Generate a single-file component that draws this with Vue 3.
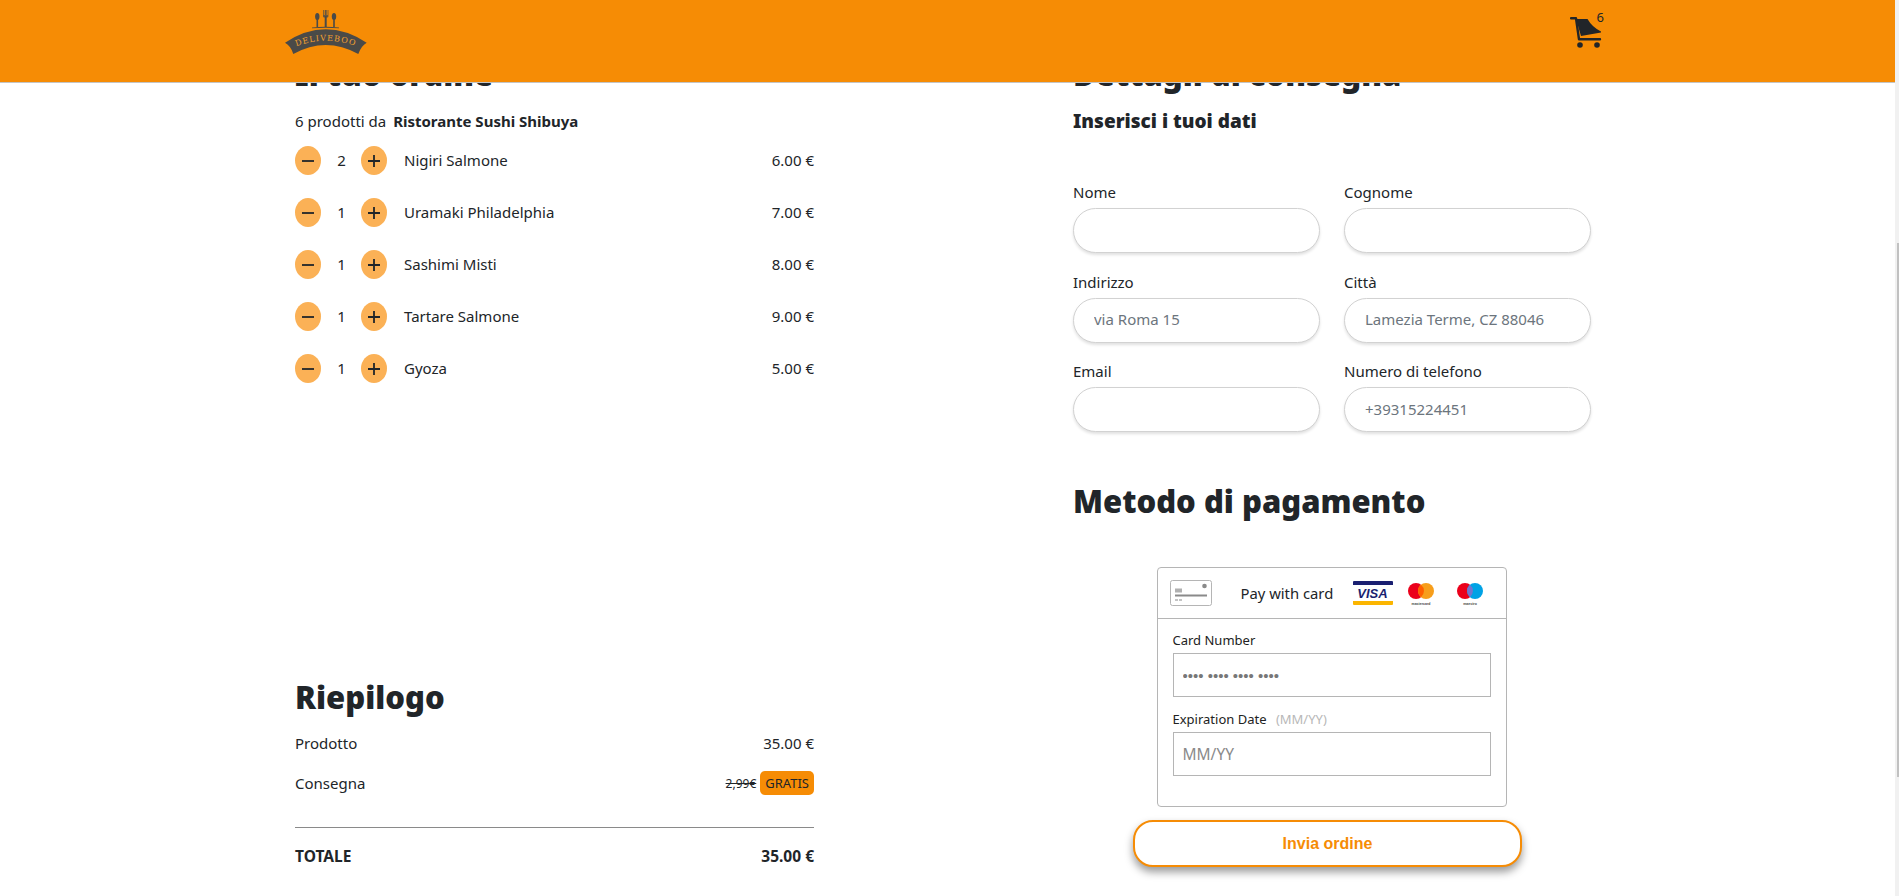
<template>
  <div class="page">
    <header class="topbar">
      <svg class="logo" viewBox="0 0 82 46" width="82" height="46">
        <g fill="#4a4a48">
          <ellipse cx="32.300" cy="7.500" rx="2.200" ry="3.600" />
          <rect x="31.500" y="9" width="1.600" height="9" />
          <ellipse cx="49" cy="7.500" rx="2.200" ry="3.600" />
          <rect x="48.200" y="9" width="1.600" height="9" />
          <rect x="39.700" y="7" width="2" height="11" />
          <path d="M38 1h.8v5h.9V1h2v5h.9V1h.8v6.500q0 1-1.200 1h-2.800q-1.400 0-1.400-1z" opacity="0.8" />
          <path d="M27 18.600q13.700-1.500 27 0v.7q-13.500-1-27 0z" />
          <path d="M0 33.700Q40.700 6.900 81.700 33.700Q76 37 73.300 45Q40.700 27 8.300 45Q6 37 0 33.700Z" />
        </g>
        <defs>
          <path id="logo-arc" d="M12 37Q40.700 26.500 69.500 37" />
        </defs>
        <text class="logo-text"><textPath href="#logo-arc" startOffset="50%" text-anchor="middle">DELIVEBOO</textPath></text>
      </svg>
      <div class="cart">
        <svg viewBox="0 0 32 31" width="32" height="31">
          <path fill="#212529" d="M6 2h11.500Q22 10 31 14.500v1L11 19z" />
          <path fill="none" stroke="#212529" stroke-width="2.400" stroke-linecap="round" stroke-linejoin="round" d="M1 1.300h5l3 21h21" />
          <circle cx="10" cy="28" r="2.800" fill="#212529" />
          <circle cx="27" cy="28" r="2.800" fill="#212529" />
        </svg>
        <span class="cart-count">6</span>
      </div>
    </header>
    <div class="scroll-track"><div class="scroll-thumb"></div></div>

    <main class="content">
      <section class="order-col">
        <div>
          <h2 class="title">Il tuo ordine</h2>
          <p class="order-from">6 prodotti da <strong>Ristorante Sushi Shibuya</strong></p>
          <ul class="items">
            <li v-for="item in items" :key="item.name" class="item">
              <button class="qty-btn" type="button">
                <svg viewBox="0 0 16 16" width="16" height="16"><path d="M2 8h12" /></svg>
              </button>
              <span class="qty">{{ item.qty }}</span>
              <button class="qty-btn" type="button">
                <svg viewBox="0 0 16 16" width="16" height="16"><path d="M2 8h12M8 2v12" /></svg>
              </button>
              <span class="item-name">{{ item.name }}</span>
              <span class="item-price">{{ item.price }} €</span>
            </li>
          </ul>
        </div>

        <div class="summary">
          <h2 class="title">Riepilogo</h2>
          <div class="summary-row first">
            <span>Prodotto</span>
            <span>35.00 €</span>
          </div>
          <div class="summary-row">
            <span>Consegna</span>
            <span class="delivery"><s>2,99€</s><span class="free">GRATIS</span></span>
          </div>
          <div class="summary-row total">
            <span>TOTALE</span>
            <span>35.00 €</span>
          </div>
        </div>
      </section>

      <section>
        <h2 class="title">Dettagli di consegna</h2>
        <h3 class="subtitle">Inserisci i tuoi dati</h3>
        <form class="fields" @submit.prevent>
          <label v-for="field in fields" :key="field.label" class="field">
            <span>{{ field.label }}</span>
            <input type="text" :placeholder="field.placeholder" />
          </label>
        </form>

        <h2 class="title pay-title">Metodo di pagamento</h2>

        <div class="card-box">
          <div class="card-head">
            <svg viewBox="0 0 42 26" width="42" height="26">
              <rect x="0.500" y="0.500" width="41" height="25" rx="2" fill="#fff" stroke="#b5b5b5" />
              <circle cx="34.500" cy="6" r="2.300" fill="#8a8a8a" />
              <rect x="5" y="8.500" width="7" height="4" fill="#b0b0b0" />
              <rect x="5" y="14.500" width="32" height="2" fill="#8a8a8a" />
              <rect x="5" y="19.500" width="3" height="1" fill="#8a8a8a" />
              <rect x="9" y="19.500" width="3" height="1" fill="#8a8a8a" />
            </svg>
            <span class="pay-label">Pay with card</span>
            <div class="visa"><span class="visa-text">VISA</span></div>
            <svg class="brand-mark" viewBox="0 0 28 24" width="28" height="24">
              <circle cx="9" cy="9" r="8" fill="#eb001b" />
              <circle cx="19" cy="9" r="8" fill="#f79e1b" />
              <path d="M14 2.800a8 8 0 0 1 0 12.400a8 8 0 0 1 0-12.400z" fill="#ff5f00" />
              <text class="brand-text" x="14" y="22.500" text-anchor="middle">mastercard</text>
            </svg>
            <svg class="brand-mark" viewBox="0 0 28 24" width="28" height="24">
              <circle cx="9" cy="9" r="8" fill="#eb001b" />
              <circle cx="19" cy="9" r="8" fill="#00a2e5" />
              <path d="M14 2.800a8 8 0 0 1 0 12.400a8 8 0 0 1 0-12.400z" fill="#7375cf" />
              <text class="brand-text" x="14" y="22.500" text-anchor="middle">maestro</text>
            </svg>
          </div>
          <div class="card-body">
            <label class="card-field">
              <span>Card Number</span>
              <input class="dots" type="text" placeholder="•••• •••• •••• ••••" />
            </label>
            <label class="card-field">
              <span>Expiration Date <em>(MM/YY)</em></span>
              <input type="text" placeholder="MM/YY" />
            </label>
          </div>
        </div>
        <button class="send" type="button">Invia ordine</button>
      </section>
    </main>
  </div>
</template>

<script setup>
const items = [
  { name: 'Nigiri Salmone', qty: 2, price: '6.00' },
  { name: 'Uramaki Philadelphia', qty: 1, price: '7.00' },
  { name: 'Sashimi Misti', qty: 1, price: '8.00' },
  { name: 'Tartare Salmone', qty: 1, price: '9.00' },
  { name: 'Gyoza', qty: 1, price: '5.00' }
]

const fields = [
  { label: 'Nome', placeholder: '' },
  { label: 'Cognome', placeholder: '' },
  { label: 'Indirizzo', placeholder: 'via Roma 15' },
  { label: 'Città', placeholder: 'Lamezia Terme, CZ 88046' },
  { label: 'Email', placeholder: '' },
  { label: 'Numero di telefono', placeholder: '+39315224451' }
]
</script>

<style>
html,
body {
  height: 100%;
  overflow: hidden;
  background: #fff;
}
</style>

<style scoped>
.page {
  font-family: "Noto Sans", "Open Sans", sans-serif;
  font-size: 15px;
  color: #212529;
  height: 896px;
  overflow: hidden;
}
.topbar {
  position: fixed;
  top: 0;
  left: 0;
  right: 4px;
  height: 83px;
  box-sizing: border-box;
  background: #f68c05;
  border-bottom: 1px solid #c4c4c4;
  z-index: 5;
  display: flex;
  justify-content: space-between;
  align-items: flex-start;
  padding: 9px 293px 0 285px;
}
.logo {
  display: block;
}
.logo-text {
  font-family: "DejaVu Serif", serif;
  font-size: 8px;
  letter-spacing: 1px;
  fill: #f3a130;
}
.cart {
  position: relative;
  width: 32px;
  height: 31px;
  margin-top: 8px;
}
.cart svg {
  display: block;
}
.cart-count {
  position: absolute;
  left: 26.500px;
  top: -7px;
  font-size: 13px;
  line-height: 14px;
}
.scroll-track {
  position: fixed;
  top: 0;
  right: 0;
  bottom: 0;
  width: 4px;
  background: #f1f1f1;
}
.scroll-thumb {
  margin: 243px 0 0 2px;
  width: 2px;
  height: 534px;
  background: #c1c1c1;
}
.content {
  padding: 55px 0 0 295px;
  display: grid;
  grid-template-columns: 519px 519px;
  column-gap: 259px;
}
.title {
  margin: 0;
  font-size: 31px;
  line-height: 38px;
  font-weight: 900;
}
.order-col {
  display: flex;
  flex-direction: column;
  height: 841px;
}
.order-from {
  margin: 17px 0 0;
  line-height: 22px;
}
.order-from strong {
  margin-left: 3px;
}
.items {
  list-style: none;
  margin: 14px 0 0;
  padding: 0;
}
.item {
  display: flex;
  align-items: center;
  height: 29px;
  margin-bottom: 23px;
}
.qty-btn {
  width: 26px;
  height: 29px;
  padding: 0;
  border: 0;
  border-radius: 50%;
  background: #fbb156;
  display: flex;
  align-items: center;
  justify-content: center;
}
.qty-btn svg {
  fill: none;
  stroke: #212529;
  stroke-width: 1.800;
}
.qty {
  width: 40px;
  padding: 0 0 2px 1px;
  box-sizing: border-box;
  text-align: center;
}
.item-name {
  margin-left: 17px;
  padding-bottom: 2px;
  flex: 1;
}
.item-price {
  padding-bottom: 2px;
}
.summary {
  margin-top: auto;
  padding-bottom: 28px;
}
.summary-row {
  display: flex;
  justify-content: space-between;
  align-items: center;
  height: 24px;
  margin-top: 16px;
}
.summary-row.first {
  margin-top: 15px;
}
.delivery {
  display: flex;
  align-items: center;
  gap: 4px;
}
.delivery s {
  font-size: 12px;
}
.free {
  background: #f68c05;
  border-radius: 5px;
  padding: 0 5px;
  font-size: 13px;
  line-height: 24px;
}
.summary-row.total {
  margin-top: 32px;
  padding-top: 16px;
  border-top: 1px solid #8a8a8a;
  font-size: 15.500px;
  font-weight: 700;
}
.subtitle {
  margin: 16px 0 0;
  font-size: 19px;
  line-height: 24px;
  font-weight: 900;
}
.fields {
  margin-top: 48px;
  display: grid;
  grid-template-columns: 247px 247px;
  column-gap: 24px;
  row-gap: 17.500px;
}
.field span {
  display: block;
  line-height: 22px;
  margin-bottom: 5px;
}
.field input {
  display: block;
  width: 100%;
  height: 45px;
  box-sizing: border-box;
  padding: 0 20px 2px;
  border: 1px solid #d2d2d2;
  border-radius: 23px;
  background: #fff;
  box-shadow: 0 2px 3px rgba(0, 0, 0, 0.12);
  font: inherit;
}
.field input::placeholder {
  color: #6c757d;
}
.pay-title {
  margin-top: 50px;
}
.card-box {
  width: 350px;
  height: 240px;
  margin: 47px 0 0 83.500px;
  border: 1px solid #b5b5b5;
  border-radius: 4px;
  box-sizing: border-box;
}
.card-head {
  height: 50px;
  border-bottom: 1px solid #b5b5b5;
  display: flex;
  align-items: center;
  padding-left: 12px;
}
.pay-label {
  width: 92px;
  flex: none;
  white-space: nowrap;
  font-size: 14.800px;
  margin: 0 20px 0 29px;
}
.visa {
  width: 40px;
  height: 24px;
  box-sizing: border-box;
  border-top: 4px solid #1a1f71;
  border-bottom: 4px solid #fbb500;
  border-radius: 1px;
  display: flex;
  align-items: center;
  justify-content: center;
}
.visa-text {
  font-family: "Liberation Sans", sans-serif;
  font-weight: 700;
  font-style: italic;
  font-size: 13px;
  color: #1a1f71;
}
.brand-mark {
  margin: 2px 0 0 14px;
}
.brand-mark + .brand-mark {
  margin-left: 21px;
}
.brand-text {
  font-family: "Liberation Sans", sans-serif;
  font-size: 3.500px;
  font-weight: 700;
  fill: #444;
}
.card-body {
  padding: 13px 15px 0;
}
.card-field {
  display: block;
  margin-bottom: 14px;
}
.card-field span {
  display: block;
  font-size: 13px;
  line-height: 16px;
  margin-bottom: 5px;
  color: #222;
}
.card-field em {
  font-style: normal;
  color: #b8b8b8;
  margin-left: 6px;
}
.card-field input {
  display: block;
  width: 100%;
  height: 44px;
  box-sizing: border-box;
  border: 1px solid #b5b5b5;
  padding: 0 9px;
  font: inherit;
  font-size: 15.500px;
  border-radius: 0;
}
.card-field input::placeholder {
  color: #8a8a8a;
}
.card-field input.dots {
  font-family: "Liberation Sans", sans-serif;
  font-size: 15px;
}
.card-field input.dots::placeholder {
  color: #777;
}
.send {
  display: block;
  width: 389px;
  height: 47px;
  margin: 13px 0 0 60px;
  background: #fff;
  border: 2px solid #f68c05;
  border-radius: 20px;
  color: #f68c05;
  font-family: "Liberation Sans", sans-serif;
  font-size: 16px;
  font-weight: 700;
  box-shadow: 0 5px 8px rgba(0, 0, 0, 0.4);
}
</style>
